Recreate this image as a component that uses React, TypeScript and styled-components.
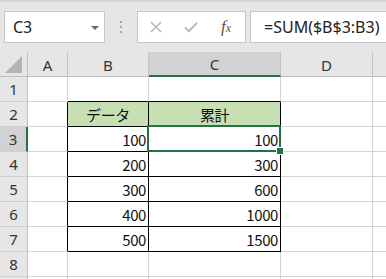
import { FunctionComponent } from 'react';
import styled, { createGlobalStyle } from 'styled-components';

const GlobalStyle = createGlobalStyle`
  html, body {
    margin: 0;
    padding: 0;
    background: #ffffff;
    overflow: hidden;
  }
  * {
    box-sizing: border-box;
  }
`;

const columns = ['A', 'B', 'C', 'D', ''];
const colWidths = '28px 40px 81px 132px 92px 1fr';
const data = [
  [100, 100],
  [200, 300],
  [300, 600],
  [400, 1000],
  [500, 1500],
];

const App: FunctionComponent = () => {
  const rowCount = 9;
  return (
    <Page>
      <GlobalStyle />
      <FormulaBar>
        <NameBox>
          <NameText>C3</NameText>
          <DropArrow />
        </NameBox>
        <Dots>
          <Dot />
          <Dot />
          <Dot />
        </Dots>
        <ButtonBox>
          <IconButton>
            <svg width="12" height="12" viewBox="0 0 12 12">
              <path d="M1 1 L11 11 M11 1 L1 11" stroke="#b3b3b3" strokeWidth="1.4" fill="none" />
            </svg>
          </IconButton>
          <IconButton>
            <svg width="15" height="12" viewBox="0 0 15 12">
              <path d="M1 6.5 L5.2 10.5 L14 1.5" stroke="#b3b3b3" strokeWidth="1.8" fill="none" />
            </svg>
          </IconButton>
          <FxButton>
            f<FxSub>x</FxSub>
          </FxButton>
        </ButtonBox>
        <FormulaInput>=SUM($B$3:B3)</FormulaInput>
      </FormulaBar>

      <Sheet>
        <Corner>
          <svg width="18" height="17" viewBox="0 0 18 17">
            <path d="M17 0 L17 17 L0 17 Z" fill="#b4b4b4" />
          </svg>
        </Corner>
        {columns.map((c) => (
          <ColHeader key={`h${c}`} $selected={c === 'C'} $last={c === ''}>
            {c}
          </ColHeader>
        ))}
        {Array.from({ length: rowCount }, (_, i) => {
          const r = i + 1;
          const inTable = r >= 2 && r <= 7;
          return [
            <RowHeader key={`r${r}`} $selected={r === 3}>
              {r < 9 ? r : ''}
            </RowHeader>,
            <Cell key={`a${r}`} $rightBlack={inTable} />,
            <Cell
              key={`b${r}`}
              $rightBlack={inTable}
              $bottomBlack={r >= 1 && r <= 7}
              $bg={r === 2 ? '#c6e0b4' : undefined}
              $align={r === 2 ? 'center' : 'flex-end'}
            >
              {r === 2 ? 'データ' : inTable ? data[r - 3][0] : ''}
            </Cell>,
            <Cell
              key={`c${r}`}
              $rightBlack={inTable}
              $bottomBlack={r >= 1 && r <= 7}
              $bg={r === 2 ? '#c6e0b4' : undefined}
              $align={r === 2 ? 'center' : 'flex-end'}
            >
              {r === 2 ? '累計' : inTable ? data[r - 3][1] : ''}
              {r === 3 && (
                <Selection>
                  <FillHandle />
                </Selection>
              )}
            </Cell>,
            <Cell key={`d${r}`} />,
            <Cell key={`e${r}`} $noRight />,
          ];
        })}
      </Sheet>
    </Page>
  );
};

export default App;

const Page = styled.div`
  width: 386px;
  height: 279px;
  overflow: hidden;
  background: #ffffff;
  font-family: 'Noto Sans CJK JP', 'Noto Sans', sans-serif;
`;

const FormulaBar = styled.div`
  display: flex;
  align-items: flex-start;
  height: 52px;
  padding: 9px 0 0 4px;
  background: #e6e6e6;
  border-top: 2px solid #d6d6d6;
`;

const NameBox = styled.div`
  display: flex;
  align-items: center;
  justify-content: space-between;
  width: 101px;
  height: 32px;
  padding: 0 5px 0 8px;
  background: #ffffff;
  border: 1px solid #c6c6c6;
`;

const NameText = styled.span`
  font-size: 16px;
  color: #222222;
  font-family: 'Noto Sans', sans-serif;
`;

const DropArrow = styled.span`
  width: 0;
  height: 0;
  margin-top: 1px;
  border-left: 4px solid transparent;
  border-right: 4px solid transparent;
  border-top: 4px solid #6a6a6a;
`;

const Dots = styled.div`
  display: flex;
  flex-direction: column;
  align-items: center;
  gap: 3px;
  width: 32px;
  padding-top: 10px;
`;

const Dot = styled.span`
  width: 2px;
  height: 2px;
  background: #a8a8a8;
`;

const ButtonBox = styled.div`
  display: flex;
  align-items: center;
  width: 109px;
  height: 32px;
  background: #ffffff;
  border: 1px solid #c6c6c6;
  padding-left: 11px;
  gap: 21px;
`;

const IconButton = styled.span`
  display: flex;
  align-items: center;
  justify-content: center;
  width: 14px;
  height: 14px;
`;

const FxButton = styled.span`
  font-family: 'Liberation Serif', serif;
  font-style: italic;
  font-size: 17px;
  color: #555555;
  margin-left: 2px;
`;

const FxSub = styled.span`
  font-size: 12px;
`;

const FormulaInput = styled.div`
  flex: 1;
  height: 32px;
  margin-left: 4px;
  margin-right: -4px;
  padding-left: 13px;
  display: flex;
  align-items: center;
  background: #ffffff;
  border: 1px solid #c6c6c6;
  border-right: none;
  font-family: 'Noto Sans', sans-serif;
  font-size: 16px;
  color: #222222;
  white-space: nowrap;
`;

const Sheet = styled.div`
  display: grid;
  grid-template-columns: ${colWidths};
  grid-auto-rows: 25px;
`;

const Corner = styled.div`
  display: flex;
  align-items: flex-end;
  justify-content: flex-end;
  padding: 0 4px 3px 0;
  background: #e6e6e6;
  border-right: 1px solid #bfbfbf;
  border-bottom: 1px solid #bfbfbf;
`;

const ColHeader = styled.div<{ $selected?: boolean; $last?: boolean }>`
  display: flex;
  align-items: center;
  justify-content: center;
  background: ${(p) => (p.$selected ? '#d2d2d2' : '#e6e6e6')};
  border-right: ${(p) => (p.$last ? 'none' : '1px solid #c4c4c4')};
  border-bottom: ${(p) => (p.$selected ? '2px solid #217346' : '1px solid #bfbfbf')};
  font-size: 15px;
  color: #333333;
  font-family: 'Noto Sans', sans-serif;
  padding-top: 1px;
`;

const RowHeader = styled.div<{ $selected?: boolean }>`
  display: flex;
  align-items: center;
  justify-content: center;
  background: ${(p) => (p.$selected ? '#d2d2d2' : '#e6e6e6')};
  border-right: ${(p) => (p.$selected ? '2px solid #217346' : '1px solid #bfbfbf')};
  border-bottom: 1px solid #cfcfcf;
  font-size: 15px;
  color: #333333;
  font-family: 'Noto Sans', sans-serif;
`;

const Cell = styled.div<{
  $rightBlack?: boolean;
  $bottomBlack?: boolean;
  $bg?: string;
  $align?: string;
  $noRight?: boolean;
}>`
  position: relative;
  display: flex;
  align-items: center;
  justify-content: ${(p) => p.$align || 'flex-start'};
  padding: 0 2px 0 2px;
  background: ${(p) => p.$bg || '#ffffff'};
  border-right: ${(p) => (p.$noRight ? 'none' : `1px solid ${p.$rightBlack ? '#000000' : '#d4d4d4'}`)};
  border-bottom: 1px solid ${(p) => (p.$bottomBlack ? '#000000' : '#d4d4d4')};
  font-size: 15px;
  letter-spacing: -0.4px;
  color: #111111;
`;

const Selection = styled.div`
  position: absolute;
  z-index: 2;
  left: -2px;
  top: -2px;
  right: -1px;
  bottom: -1px;
  border: 2px solid #217346;
  pointer-events: none;
`;

const FillHandle = styled.div`
  position: absolute;
  right: -4px;
  bottom: -4px;
  width: 6px;
  height: 6px;
  background: #217346;
  outline: 1px solid #ffffff;
`;
